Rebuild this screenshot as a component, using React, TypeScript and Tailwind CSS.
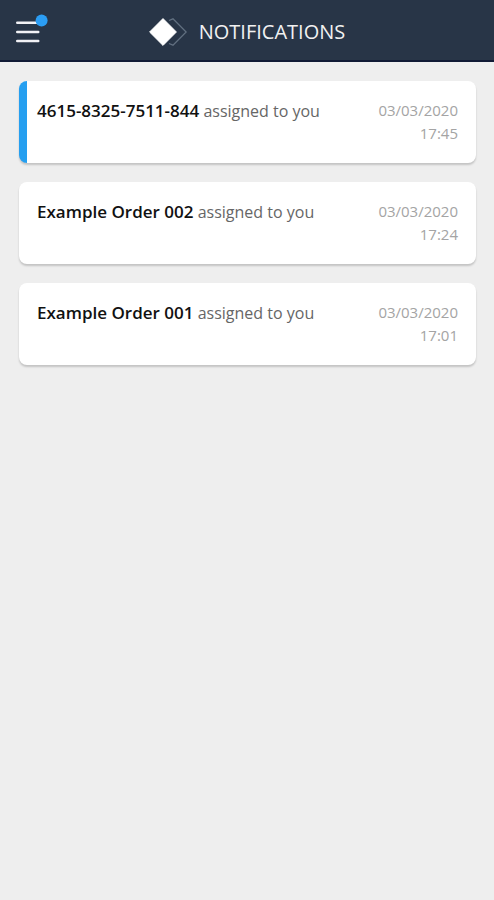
const notifications = [
  { id: 1, title: "4615-8325-7511-844", date: "03/03/2020", time: "17:45", unread: true },
  { id: 2, title: "Example Order 002", date: "03/03/2020", time: "17:24", unread: false },
  { id: 3, title: "Example Order 001", date: "03/03/2020", time: "17:01", unread: false },
];

function Header() {
  return (
    <header className="relative h-[62px] bg-[#283547] border-b-2 border-[#111a35] flex items-center justify-center">
      <button aria-label="Menu" className="absolute left-4 top-[14px] w-8 h-8">
        <svg viewBox="0 0 32 32" className="w-8 h-8" fill="none">
          <path
            d="M1.2 8.7H22.3M1.2 18H22.3M1.2 27H22.3"
            stroke="#f1f1f5"
            strokeWidth="2.4"
            strokeLinecap="round"
          />
          <circle cx="25.6" cy="6.4" r="6" fill="#2b9df4" />
        </svg>
      </button>
      <div className="flex items-center gap-3 pt-1">
        <svg viewBox="0 0 38 28" className="w-[38px] h-7" fill="none">
          <path d="M20 2.5L24 .8L37.2 14L24 27.2L20 25.5" stroke="#627081" strokeWidth="1.3" />
          <path
            d="M14 .6L27.4 14L14 27.4L.6 14Z"
            fill="#fff"
            stroke="#fff"
            strokeLinejoin="round"
          />
        </svg>
        <h1 className="text-xl leading-7 text-[#f1f1f1]">NOTIFICATIONS</h1>
      </div>
    </header>
  );
}

function NotificationCard({ item }: { item: (typeof notifications)[number] }) {
  return (
    <li
      className={`min-h-[82px] rounded-lg bg-white flex justify-between pt-[18px] pr-[18px] shadow-[0_2px_2px_rgba(0,0,0,0.18)] ${
        item.unread ? "border-l-8 border-[#259ff0] pl-[10px]" : "pl-[18px]"
      }`}
    >
      <p className="text-[16px] leading-[23px] text-[#666]">
        <strong className="text-[17px] font-semibold text-[#111]">{item.title}</strong> assigned to
        you
      </p>
      <div className="text-[15px] leading-[23px] text-[#a4a4a4] text-right">
        <p>{item.date}</p>
        <p>{item.time}</p>
      </div>
    </li>
  );
}

function App() {
  return (
    <div className="min-h-screen bg-[#eeeeee] font-['Open_Sans',sans-serif]">
      <Header />
      <main className="pl-[19px] pr-[18px] py-[19px]">
        <ul className="flex flex-col gap-[19px]">
          {notifications.map((item) => (
            <NotificationCard key={item.id} item={item} />
          ))}
        </ul>
      </main>
    </div>
  );
}

export default App;
